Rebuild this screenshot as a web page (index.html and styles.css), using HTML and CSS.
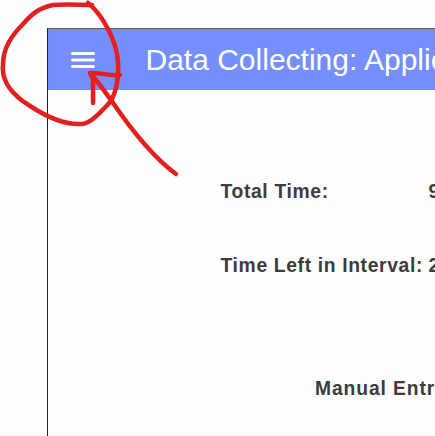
FILE: index.html
```
<!DOCTYPE html>
<html lang="en">
<head>
<meta charset="utf-8">
<title>Data Collecting</title>
<link rel="stylesheet" href="styles.css">
</head>
<body>
<main class="window">
  <header class="toolbar">
    <svg class="menu" width="24" height="18" viewBox="0 0 24 18"><path d="M1.5 2.5h21M1.5 9h21M1.5 15.5h21"/></svg>
    <h1 class="title">Data Collecting: Applic</h1>
  </header>
  <section class="times">
    <span>Total Time:</span><span>9</span>
    <span>Time Left in Interval:</span><span>2</span>
  </section>
  <h2 class="manual">Manual Entr</h2>
</main>
<svg class="annotation" viewBox="0 0 435 436">
  <path d="M88 3L92 6M92 5C80 5 66 4 53 5C38 8 31 15 24 23C11 36 3 48 3 65C1 83 14 96 30 106C47 117 65 124 78 124C87 125 94 120 111 101C117 90 119 79 118 62C117 42 103 15 88 3"/>
  <path d="M176 174C150 155 128 125 111 100C105 92 98 82 91 74"/>
  <path d="M93 103L93 79L90 73C99 72 107 76 120 75"/>
</svg>
</body>
</html>
```
FILE: styles.css
```
body {
  margin: 0;
  height: 436px;
  overflow: hidden;
  background: #fefefe;
  font-family: "Liberation Sans", Arial, sans-serif;
  color: #3c3c3c;
}
.window {
  box-sizing: border-box;
  height: 408px;
  margin: 28px 0 0 47px;
  border-top: 1px solid #64646c;
  border-left: 1px solid #222;
  overflow: hidden;
}
.toolbar {
  box-sizing: border-box;
  display: flex;
  align-items: center;
  height: 61px;
  padding-left: 23px;
  border-top: 1px solid #8b8d9d;
  background: #758ffe;
  color: #fff;
}
.menu {
  flex: none;
  fill: none;
  stroke: #fff;
  stroke-width: 3;
  stroke-linecap: round;
}
.title {
  margin: 0 0 0 50.5px;
  font-size: 30px;
  font-weight: 400;
  line-height: 34px;
  white-space: nowrap;
}
.times {
  display: grid;
  grid-template-columns: 208px 20px;
  row-gap: 50px;
  margin: 90px 0 0 172.5px;
  font-size: 19.3px;
  font-weight: 700;
  line-height: 24px;
  letter-spacing: 0.65px;
  white-space: nowrap;
}
.manual {
  margin: 99px 0 0 267px;
  font-size: 19.3px;
  line-height: 24px;
  letter-spacing: 0.9px;
  white-space: nowrap;
}
.annotation {
  position: absolute;
  inset: 0;
  width: 435px;
  height: 436px;
  fill: none;
  stroke: #e31f20;
  stroke-width: 4.5;
  stroke-linecap: round;
  stroke-linejoin: round;
}
```
